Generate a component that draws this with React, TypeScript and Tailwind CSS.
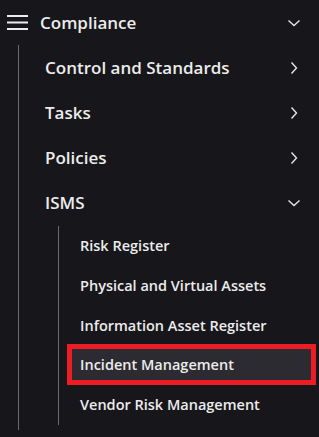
import React from "react";

type ChevronProps = { dir: "down" | "right" };

function Chevron({ dir }: ChevronProps) {
  return (
    <svg width="14" height="14" viewBox="0 0 14 14" fill="none" className="shrink-0">
      {dir === "down" ? (
        <path d="M1.5 4.5 L7 9.5 L12.5 4.5" stroke="#e6e6e6" strokeWidth="1.4" />
      ) : (
        <path d="M4.5 1.5 L9.5 7 L4.5 12.5" stroke="#e6e6e6" strokeWidth="1.4" />
      )}
    </svg>
  );
}

const sections = [
  { name: "Control and Standards", open: false },
  { name: "Tasks", open: false },
  { name: "Policies", open: false },
];

const ismsItems = [
  "Risk Register",
  "Physical and Virtual Assets",
  "Information Asset Register",
  "Incident Management",
  "Vendor Risk Management",
];

export default function App() {
  return (
    <div
      className="w-full h-[437px] bg-[#17161b] text-[#ececec] overflow-hidden"
      style={{ fontFamily: '"Open Sans", sans-serif' }}
    >
      <div className="flex items-center h-[45px] pl-[7px] pr-[18px]">
        <svg width="21" height="16" viewBox="0 0 21 16" className="shrink-0">
          <rect x="0" y="0" width="21" height="2" fill="#ececec" />
          <rect x="0" y="6.5" width="21" height="2" fill="#ececec" />
          <rect x="0" y="13" width="21" height="2" fill="#ececec" />
        </svg>
        <span className="ml-[12px] text-[17px] font-semibold flex-1">Compliance</span>
        <Chevron dir="down" />
      </div>

      <div className="ml-[18px] border-l border-[#6b6b6b] pb-[5px]">
        {sections.map((s) => (
          <div key={s.name} className="flex items-center h-[45px] pl-[26px] pr-[18px]">
            <span className="flex-1 text-[17px] font-semibold">{s.name}</span>
            <Chevron dir="right" />
          </div>
        ))}
        <div className="flex items-center h-[45px] pl-[26px] pr-[18px]">
          <span className="flex-1 text-[17px] font-semibold">ISMS</span>
          <Chevron dir="down" />
        </div>

        <div className="ml-[39px] border-l border-[#6b6b6b] mt-[1px]">
          {ismsItems.map((item) => {
            const active = item === "Incident Management";
            return active ? (
              <div
                key={item}
                className="flex items-center h-[41px] -mt-[2px] ml-[8px] mr-[3px] pl-[8px] border-[5px] border-[#ee1c25] bg-[#2c2b31] text-[14.5px] font-semibold"
              >
                {item}
              </div>
            ) : (
              <div key={item} className="flex items-center h-[40px] pl-[21px] text-[14.5px] font-semibold">
                {item}
              </div>
            );
          })}
        </div>
      </div>
    </div>
  );
}
